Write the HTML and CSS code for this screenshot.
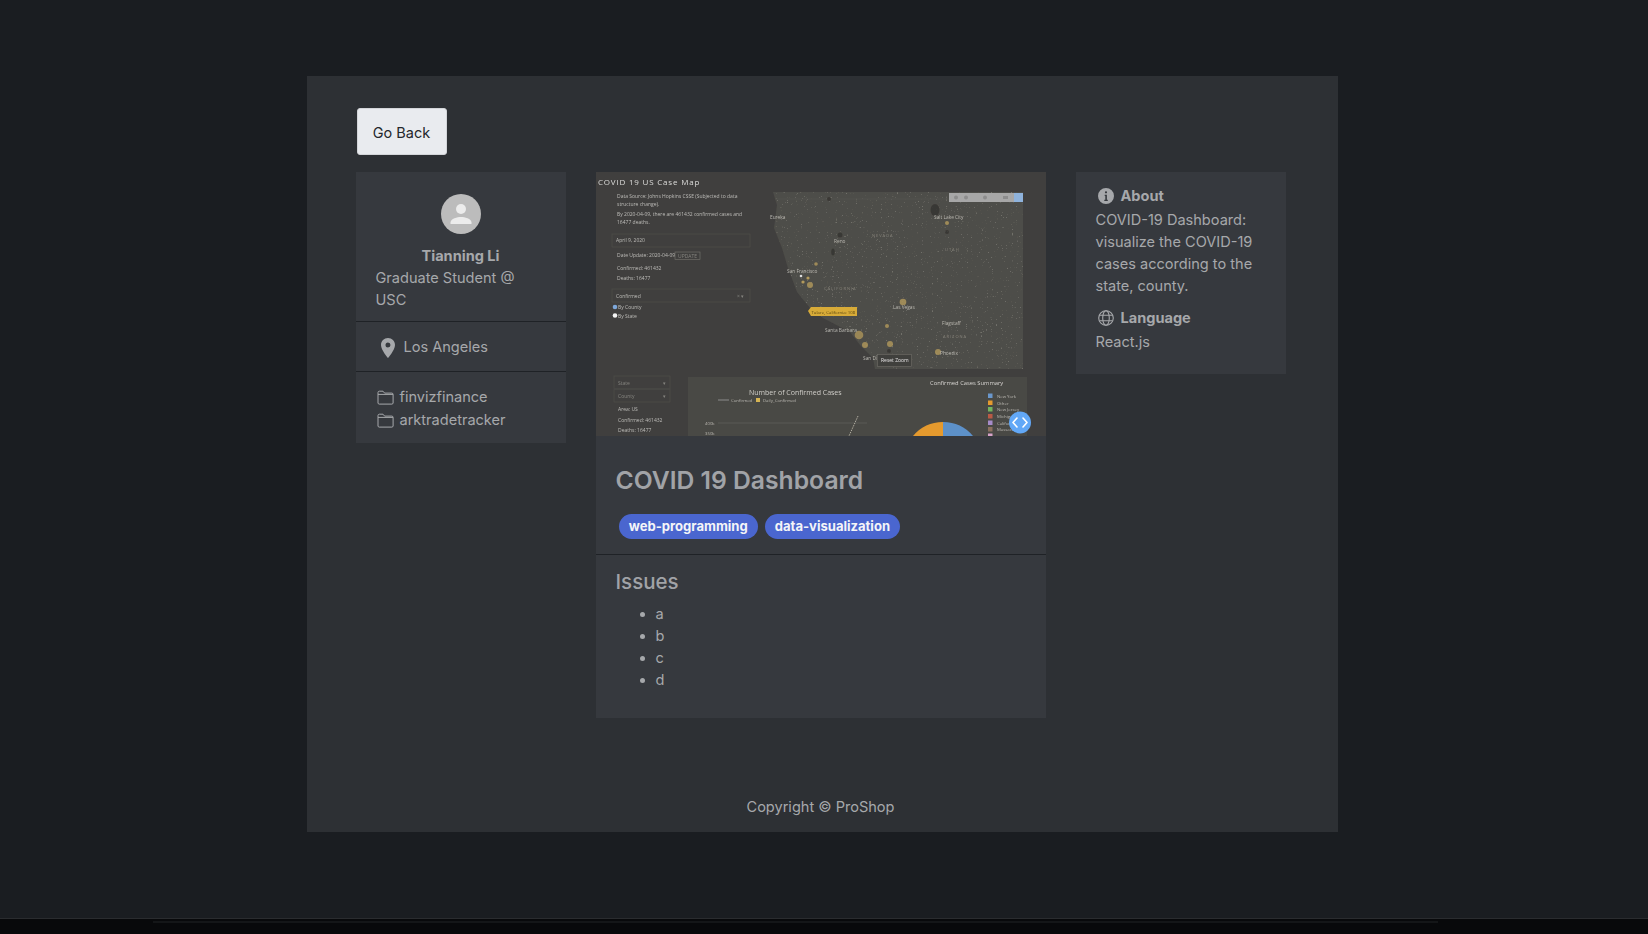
FILE: index.html
```html
<!DOCTYPE html>
<html lang="en">
<head>
<meta charset="utf-8">
<title>COVID 19 Dashboard</title>
<link rel="stylesheet" href="styles.css">
</head>
<body>
<div class="page">
  <main class="panel">
    <button class="back-btn">Go Back</button>
    <div class="columns">
      <aside class="card">
        <section class="profile">
          <svg class="avatar" viewBox="0 0 40 40"><circle cx="20" cy="20" r="20" fill="#bcbcbc"/><circle cx="20" cy="15" r="5" fill="#ececec"/><path d="M9.5 30v-1.6c0-3.6 7-5.400 10.500-5.400s10.500 1.800 10.500 5.400V30z" fill="#ececec"/></svg>
          <div class="name">Tianning Li</div>
          <div class="role">Graduate Student @ USC</div>
        </section>
        <section class="location">
          <svg class="pin" viewBox="0 0 14 20"><path fill-rule="evenodd" d="M7 0C3.100 0 0 3.100 0 7c0 5 7 13 7 13s7-8 7-13c0-3.900-3.100-7-7-7zm0 9.500A2.500 2.500 0 1 1 7 4.500a2.500 2.500 0 0 1 0 5z" fill="#a6a8ab"/></svg>
          <span>Los Angeles</span>
        </section>
        <section class="repos">
          <div class="repo"><svg class="folder" viewBox="0 0 17 15"><path d="M1 13V2.500C1 1.700 1.500 1.200 2.300 1.200H6l1.600 1.900h7.300c.7 0 1.200.5 1.200 1.200V13c0 .6-.5 1.100-1.200 1.100H2.200C1.500 14.100 1 13.600 1 13zM1 4.400h15" fill="none" stroke="#a6a8ab" stroke-width="1"/></svg><span>finvizfinance</span></div>
          <div class="repo"><svg class="folder" viewBox="0 0 17 15"><path d="M1 13V2.500C1 1.700 1.500 1.200 2.300 1.200H6l1.600 1.900h7.300c.7 0 1.200.5 1.200 1.200V13c0 .6-.5 1.100-1.200 1.100H2.200C1.500 14.100 1 13.600 1 13zM1 4.400h15" fill="none" stroke="#a6a8ab" stroke-width="1"/></svg><span>arktradetracker</span></div>
        </section>
      </aside>

      <article class="card">
        <div class="shot">
          <svg class="shot-svg" viewBox="596 172 450 264" xmlns="http://www.w3.org/2000/svg">
            <defs>
              <filter id="soft" x="0" y="0" width="100%" height="100%"><feGaussianBlur stdDeviation=".38"/></filter>
              <filter id="speckle" x="0" y="0" width="100%" height="100%">
                <feTurbulence type="fractalNoise" baseFrequency=".8" numOctaves="1" seed="7"/>
                <feColorMatrix type="matrix" values="0 0 0 0 .56  0 0 0 0 .55  0 0 0 0 .5  5 5 0 0 -6.100"/>
                <feComposite in2="SourceGraphic" operator="in"/>
              </filter>
            </defs>
            <rect x="596" y="172" width="450" height="264" fill="#403f3e"/>
            <g filter="url(#soft)">
              <path d="M773 192l4 13-3 23 8 20 6 20 9 24 13 16 13 10 27 14 10 13 13 13 2 11h148V192z" fill="#4e4d48"/>
              <path d="M773 192l4 13-3 23 8 20 6 20 9 24 13 16 13 10 27 14 10 13 13 13 2 11h148V192z" fill="#4e4d48" filter="url(#speckle)" opacity=".3"/>
              <path d="M775 199h248" stroke="#5a5954" stroke-width=".5" fill="none"/>
              <g fill="#33322f" opacity=".75">
                <ellipse cx="935" cy="210" rx="4.500" ry="6"/><circle cx="947" cy="232" r="2"/><circle cx="840" cy="235" r="2.500"/><ellipse cx="833" cy="252" rx="1.800" ry="3.500"/><circle cx="829" cy="199" r="2"/><circle cx="878" cy="358" r="2"/><circle cx="889" cy="351" r="2"/>
              </g>
              <g fill="#b39a5c">
                <circle cx="903" cy="302" r="3.300" opacity=".8"/><circle cx="859" cy="335" r="4.300" opacity=".75"/><circle cx="865" cy="345" r="3" opacity=".8"/><circle cx="890" cy="344" r="3" opacity=".8"/><circle cx="887" cy="326" r="2" opacity=".8"/><circle cx="938" cy="352" r="3" opacity=".8"/><circle cx="947" cy="223" r="2" opacity=".8"/><circle cx="810" cy="285" r="3" opacity=".8"/><circle cx="816" cy="264" r="1.800" opacity=".8"/><circle cx="803" cy="282" r="1.600"/><circle cx="808" cy="278" r="1.600"/>
                <circle cx="801" cy="276" r="1.300" fill="#ddd"/>
              </g>
              <g class="map-label">
                <text x="770" y="219">Eureka</text>
                <text x="787" y="273">San Francisco</text>
                <text x="834" y="243">Reno</text>
                <text x="934" y="219">Salt Lake City</text>
                <text x="893" y="309">Las Vegas</text>
                <text x="825" y="332">Santa Barbara</text>
                <text x="942" y="325">Flagstaff</text>
                <text x="940" y="355">Phoenix</text>
                <text x="863" y="360">San Di</text>
              </g>
              <g class="map-state">
                <text x="872" y="237">NEVADA</text>
                <text x="945" y="251">UTAH</text>
                <text x="824" y="290">CALIFORNIA</text>
                <text x="943" y="338">ARIZONA</text>
              </g>
              <path d="M808 311l3-4h46v9h-46z" fill="#d8ab37"/>
              <text class="tip" x="811.500" y="313.500">Tulare, California: 108</text>
              <rect x="949" y="193" width="74" height="9" fill="#a7a7a7"/>
              <rect x="1014" y="193" width="9" height="9" fill="#8fb3dc"/>
              <g fill="#8c8c8c"><circle cx="956" cy="197.500" r="2"/><circle cx="966" cy="197.500" r="2"/><circle cx="985" cy="197.500" r="2"/><rect x="1003" y="196" width="5" height="3"/></g>
              <rect x="877.500" y="354.500" width="34" height="12" fill="#403f3e" stroke="#6f6e6a" stroke-width=".6"/>
              <text class="small light" x="881" y="362">Reset Zoom</text>

              <text class="title" x="598" y="184.500">COVID 19 US Case Map</text>
              <g class="small">
                <text x="617" y="198">Data Source: Johns Hopkins CSSE (Subjected to data</text>
                <text x="617" y="206">structure change).</text>
                <text x="617" y="216">By 2020-04-09, there are 461432 confirmed cases and</text>
                <text x="617" y="224">16477 deaths.</text>
                <text x="616" y="242">April 9, 2020</text>
                <text x="617" y="257">Date Update: 2020-04-09</text>
                <text x="617" y="270">Confirmed: 461432</text>
                <text x="617" y="280">Deaths: 16477</text>
                <text x="616" y="298">Confirmed</text>
                <text x="618" y="309">By County</text>
                <text x="618" y="318">By State</text>
                <text x="618" y="411">Area: US</text>
                <text x="618" y="422">Confirmed: 461432</text>
                <text x="618" y="432">Deaths: 16477</text>
              </g>
              <g fill="none" stroke="#4e4d4b" stroke-width=".6">
                <rect x="612" y="234" width="138" height="13"/>
                <rect x="675" y="252" width="25" height="7.500" stroke="#77766f"/>
                <rect x="612" y="289" width="138" height="13"/>
                <rect x="614" y="376" width="56" height="13"/>
                <rect x="614" y="389" width="56" height="13"/>
              </g>
              <circle cx="615" cy="307" r="2.300" fill="#7da7d9"/>
              <circle cx="615" cy="315.500" r="2.300" fill="#f4f4f4"/>
              <g class="small dim">
                <text x="618" y="385">State</text>
                <text x="618" y="398">County</text>
                <text x="678" y="258">UPDATE</text>
                <text x="737" y="298">× ▾</text>
                <text x="663" y="385">▾</text>
                <text x="663" y="398">▾</text>
              </g>

              <rect x="688" y="377" width="339" height="62" fill="#4a4945"/>
              <text class="chart-title" x="749" y="394.500">Number of Confirmed Cases</text>
              <path d="M718 400h11" stroke="#bbb" stroke-width=".6"/>
              <rect x="756" y="398" width="4" height="4" fill="#d6b452"/>
              <g class="tiny">
                <text x="731" y="401.500">Confirmed</text>
                <text x="763" y="401.500">Daily_Confirmed</text>
                <text x="705" y="425">400k</text>
                <text x="705" y="435">350k</text>
              </g>
              <path d="M718 423h149" stroke="#6a6964" stroke-width=".5"/>
              <path d="M858 416l-9 20" stroke="#c9c7b8" stroke-width=".8" stroke-dasharray="1.500 1"/>
              <text class="chart-sub" x="930" y="385">Confirmed Cases Summary</text>
              <path d="M943 422a39 39 0 0 1 30 14h-30z" fill="#5d91c9"/>
              <path d="M943 422a39 39 0 0 0-30 14h30z" fill="#e59a2e"/>
              <g>
                <rect x="988" y="393.500" width="4.500" height="4.500" fill="#6a97cc"/>
                <rect x="988" y="400.500" width="4.500" height="4.500" fill="#e59a2e"/>
                <rect x="988" y="407" width="4.500" height="4.500" fill="#73b45f"/>
                <rect x="988" y="414" width="4.500" height="4.500" fill="#b95a44"/>
                <rect x="988" y="420.500" width="4.500" height="4.500" fill="#a68bc9"/>
                <rect x="988" y="427" width="4.500" height="4.500" fill="#8c6f60"/>
                <rect x="988" y="433.500" width="4.500" height="2.500" fill="#d8a3c9"/>
              </g>
              <g class="tiny">
                <text x="997" y="397.500">New York</text>
                <text x="997" y="404.500">Other</text>
                <text x="997" y="411">New Jersey</text>
                <text x="997" y="418">Michigan</text>
                <text x="997" y="424.500">California</text>
                <text x="997" y="431">Massachu</text>
              </g>
            </g>
            <circle cx="1020" cy="422.500" r="11" fill="#62a8f7"/>
            <path d="M1017 418l-4 4.500 4 4.500M1023 418l4 4.500-4 4.500" fill="none" stroke="#fff" stroke-width="1.600" stroke-linecap="round" stroke-linejoin="round"/>
          </svg>
        </div>
        <section class="head">
          <h1>COVID 19 Dashboard</h1>
          <div class="tags"><span class="tag">web-programming</span><span class="tag">data-visualization</span></div>
        </section>
        <section class="issues">
          <h2>Issues</h2>
          <ul><li>a</li><li>b</li><li>c</li><li>d</li></ul>
        </section>
      </article>

      <aside class="card about">
        <div class="about-head first"><svg class="about-icon" viewBox="0 0 16 16"><path fill-rule="evenodd" d="M8 0a8 8 0 1 0 0 16A8 8 0 0 0 8 0zm0 3.200a1.100 1.100 0 1 1 0 2.200 1.100 1.100 0 0 1 0-2.200zM6.700 6.700h2.200v5h.9v1.200H6.300v-1.200h1V7.900h-.6z" fill="#a6a8ab"/></svg><span>About</span></div>
        <p>COVID-19 Dashboard: visualize the COVID-19 cases according to the state, county.</p>
        <div class="about-head"><svg class="about-icon" viewBox="0 0 16 16"><g fill="none" stroke="#a6a8ab" stroke-width="1.100"><circle cx="8" cy="8" r="7.300"/><ellipse cx="8" cy="8" rx="3.300" ry="7.300"/><path d="M1.500 5.300h13M1.500 10.700h13"/></g></svg><span>Language</span></div>
        <p>React.js</p>
      </aside>
    </div>
    <footer class="foot">Copyright © ProShop</footer>
  </main>
</div>
<div class="strip"><div class="strip-inner"></div></div>
</body>
</html>
```

FILE: styles.css
```css
* { box-sizing: border-box; }
html, body { height: 100%; }
body {
  margin: 0;
  height: 934px;
  overflow: hidden;
  display: flex;
  flex-direction: column;
  background: #1a1d21;
  font-family: Inter, "Liberation Sans", sans-serif;
  font-size: 14.550px;
  line-height: 22px;
  color: #a6a8ab;
}
.page { flex: 1; padding-top: 76px; display: flex; justify-content: center; padding-right: 4px; }
.panel {
  width: 1031px;
  height: 756px;
  background: #2d3034;
  padding: 32px 50px 0 49px;
  display: flex;
  flex-direction: column;
}
.back-btn {
  align-self: flex-start;
  margin-left: 1px;
  width: 90px;
  height: 47px;
  padding: 2px 0 0;
  background: #e9ebef;
  color: #24272b;
  border: 1px solid #d3d5d9;
  border-radius: 3px;
  font: 14.500px Inter, "Liberation Sans", sans-serif;
}
.columns {
  margin-top: 17px;
  display: grid;
  grid-template-columns: 210px 450px 210px;
  gap: 30px;
  align-items: start;
}
.card { background: #36393e; }
.profile { padding: 22px 20px 10px; border-bottom: 1px solid #1f2226; }
.avatar { display: block; width: 40px; height: 40px; margin: 0 auto 11px; }
.name { font-weight: 700; text-align: center; }
.location {
  display: flex;
  align-items: center;
  gap: 9px;
  height: 50px;
  padding-left: 25px;
  border-bottom: 1px solid #1f2226;
}
.pin { width: 14px; height: 20px; margin-top: 2px; }
.repos { padding: 13px 21px 12px; }
.repo { display: flex; align-items: center; gap: 6px; height: 23px; }
.folder { width: 17px; height: 15px; margin-top: 1px; }
.shot { height: 264px; }
.shot-svg { display: block; width: 450px; height: 264px; }
.shot-svg text { font-family: "Open Sans", "Liberation Sans", sans-serif; }
.small { font-size: 5px; fill: #bdbcb8; }
.small.light { fill: #e4e4e2; }
.small.dim { fill: #85847f; }
.tiny { font-size: 4.300px; fill: #b8b7b1; }
.title { font-size: 8px; letter-spacing: .8px; fill: #dcdcda; }
.chart-title { font-size: 7px; fill: #cfcec9; }
.chart-sub { font-size: 5.800px; fill: #d6d5d2; }
.map-label { font-size: 4.800px; fill: #bab9b3; }
.map-state { font-size: 4px; letter-spacing: 1px; fill: #86847d; }
.tip { font-size: 4.300px; fill: #5b4713; }
.head { padding: 27.500px 20px 14.500px; border-bottom: 1px solid #1f2226; }
h1 { margin: 0; font-size: 24.700px; line-height: 32px; font-weight: 600; color: #a1a3a7; }
.tags { display: flex; gap: 6.500px; margin: 18.500px 0 0 3px; }
.tag {
  height: 25px;
  padding: 0 10.300px;
  border-radius: 13px;
  background: #4a66cf;
  color: #f4f5f8;
  font-size: 13.050px;
  font-weight: 700;
  line-height: 25px;
}
.issues { padding: 13px 20px 27.100px; }
h2 { margin: 0; font-size: 20.500px; line-height: 28px; font-weight: 500; color: #a1a3a7; }
ul { margin: 7px 0 0; padding-left: 40px; }
li { line-height: 22px; }
.about { padding: 13px 20px 21px; }
.about-head { display: flex; align-items: center; gap: 7px; font-weight: 700; height: 22px; margin-top: 10px; padding-left: 2px; }
.about-head.first { margin-top: 0; }
.about-icon { width: 16px; height: 16px; }
.about p { margin: 2px 0 0; }
.foot { margin-top: auto; padding: 0 2px 14px 0; text-align: center; }
.strip { height: 16px; background: #08090b; border-top: 1px solid #2a2c2f; flex: none; padding: 2px 210px 0 153px; }
.strip-inner { height: 2px; background: #141618; }
```
